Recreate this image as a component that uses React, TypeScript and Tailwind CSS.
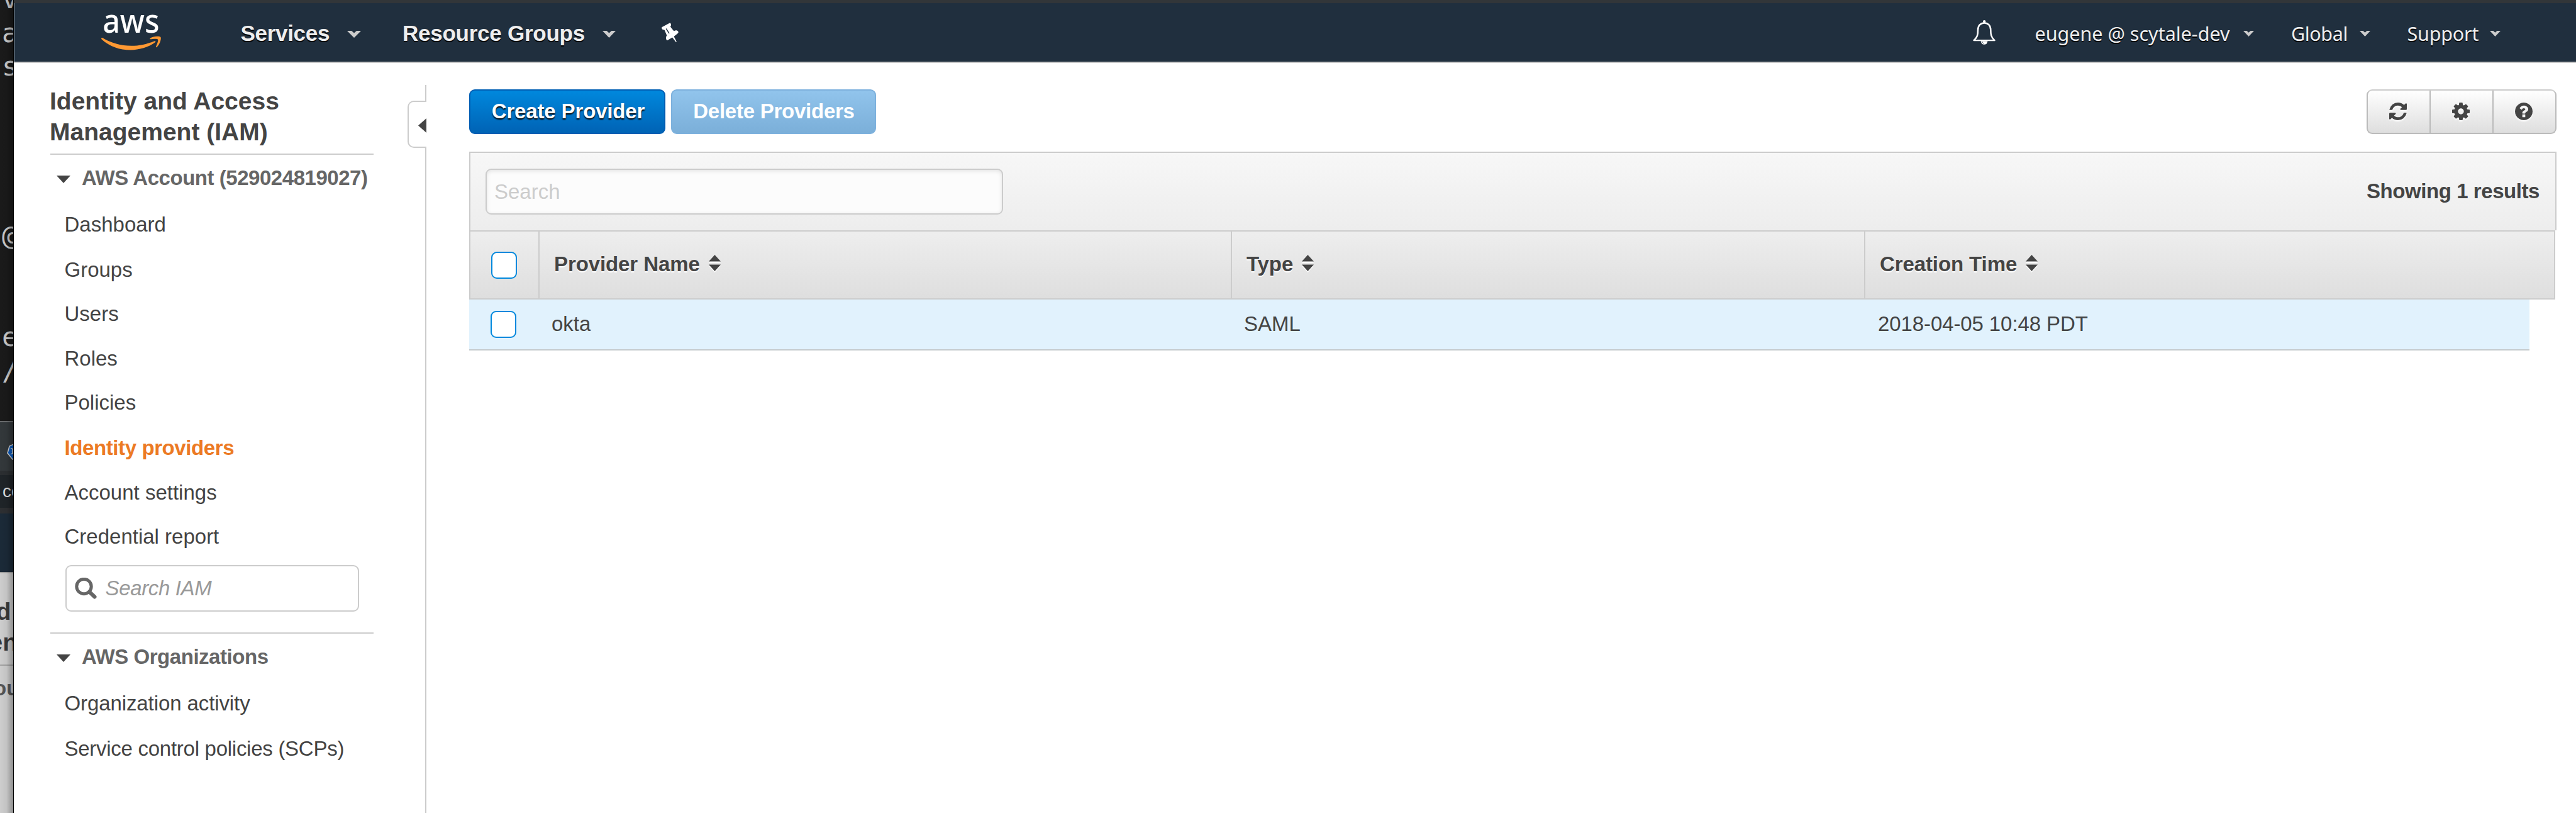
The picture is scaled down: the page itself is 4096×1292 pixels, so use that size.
import type { ReactNode } from "react";

const PATHS = {
  refresh:
    "M1639 1056q0 5-1 7-64 268-268 434.5t-478 166.5q-146 0-282.5-55t-243.5-157l-129 129q-19 19-45 19t-45-19-19-45v-448q0-26 19-45t45-19h448q26 0 45 19t19 45-19 45l-137 137q71 66 161 102t187 36q134 0 250-65t186-179q11-17 53-117 8-23 30-23h192q13 0 22.5 9.5t9.5 22.5zm25-800v448q0 26-19 45t-45 19h-448q-26 0-45-19t-19-45 19-45l138-138q-148-137-349-137-134 0-250 65t-186 179q-11 17-53 117-8 23-30 23h-199q-13 0-22.5-9.5t-9.5-22.5v-7q65-268 270-434.5t480-166.5q146 0 284 55.5t245 156.5l130-129q19-19 45-19t45 19 19 45z",
  cog: "M1024 896q0-106-75-181t-181-75-181 75-75 181 75 181 181 75 181-75 75-181zm512-109v222q0 12-8 23t-20 13l-185 28q-19 54-39 91 35 50 107 138 10 12 10 25t-9 23q-27 37-99 108t-94 71q-12 0-26-9l-138-108q-44 23-91 38-16 136-29 186-7 28-36 28h-222q-14 0-24.5-8.5t-11.5-21.5l-28-184q-49-16-90-37l-141 107q-10 9-25 9-14 0-25-11-126-114-165-168-7-10-7-23 0-12 8-23 15-21 51-66.5t54-70.5q-27-50-41-99l-183-27q-13-2-21-12.5t-8-23.5v-222q0-12 8-23t19-13l186-28q14-46 39-92-40-57-107-138-10-12-10-24 0-10 9-23 26-36 98.5-107.5t94.5-71.5q13 0 26 10l138 107q44-23 91-38 16-136 29-186 7-28 36-28h222q14 0 24.5 8.5t11.5 21.5l28 184q49 16 90 37l142-107q9-9 24-9 13 0 25 10 129 119 165 170 7 8 7 22 0 12-8 23-15 21-51 66.5t-54 70.5q26 50 41 98l183 28q13 2 21 12.5t8 23.5z",
  help: "M1024 1376v-192q0-14-9-23t-23-9h-192q-14 0-23 9t-9 23v192q0 14 9 23t23 9h192q14 0 23-9t9-23zm256-672q0-88-55.5-163t-138.5-116-170-41q-243 0-371 213-15 24 8 42l132 100q7 6 19 6 16 0 25-12 53-68 86-92 34-24 86-24 48 0 85.5 26t37.5 59q0 38-20 61t-68 45q-63 28-115.5 86.5t-52.5 125.5v36q0 14 9 23t23 9h192q14 0 23-9t9-23q0-19 21.5-49.5t54.5-49.5q32-18 49-28.5t46-35 44.5-48 28-60.5 12.5-81zm384 192q0 209-103 385.5t-279.5 279.5-385.5 103-385.5-103-279.5-279.5-103-385.5 103-385.5 279.5-279.5 385.5-103 385.5 103 279.5 279.5 103 385.5z",
};

function AwsLogo() {
  return (
    <svg className="h-[57px] w-[95px] shrink-0" viewBox="72 76 306 184" preserveAspectRatio="none">
      <text
        x="79"
        y="170"
        fill="#fff"
        fontFamily="'Noto Sans', sans-serif"
        fontWeight="500"
        fontSize="170"
        textLength="291"
        lengthAdjust="spacingAndGlyphs"
      >
        aws
      </text>
      <path
        fill="#ff9933"
        d="M74 196C71 199 72 201 75 204C115 240 165 258 223 258C265 258 315 244 348 219C353 215 349 210 343 213C306 228 265 237 226 237C172 237 122 222 82 198C79 196 76 194 74 196Z"
      />
      <path
        fill="#ff9933"
        d="M362 204C358 199 334 202 324 203C320 203 320 200 323 198C342 185 372 188 376 192C380 197 375 226 357 243C354 246 351 244 352 241C356 231 366 210 362 204Z"
      />
    </svg>
  );
}

function PinIcon() {
  return (
    <svg className="h-[31px] w-[27px] shrink-0" viewBox="77 55 87 100">
      <path
        fill="#fff"
        d="M78 78C76 86 80 92 88 91L92 93L104 121L101 125C97 133 100 143 106 146L132 131L150 154C152 156 154 154 153 151L140 126L160 110C164 106 164 102 161 99C156 94 148 93 143 97L138 96L122 76C127 70 127 61 120 56Z"
      />
      <path d="M101 87L115 109" stroke="#202f3e" strokeWidth="4.5" strokeLinecap="round" />
    </svg>
  );
}

function BellIcon() {
  return (
    <svg className="h-[39px] w-[36px] shrink-0" viewBox="54 48 117 126">
      <path
        d="M59 152C78 136 80 122 80 98C80 76 94 62 113 62C132 62 146 76 146 98C146 122 148 136 166 152Z"
        fill="none"
        stroke="#fff"
        strokeWidth="8"
        strokeLinejoin="round"
      />
      <circle cx="113" cy="55" r="7" fill="#fff" />
      <path d="M95 156A17.500 17.500 0 0 0 130 156Z" fill="#fff" />
      <path d="M101 158Q104 167 112 169" fill="none" stroke="#202f3e" strokeWidth="2.500" />
    </svg>
  );
}

function Chevron({ className }: { className: string }) {
  return (
    <svg className={className} viewBox="0 0 22 11" preserveAspectRatio="none">
      <path d="M0 0H7L11 3.500L15 0H22L11 11Z" fill="#ccc" />
    </svg>
  );
}

function SortIcon() {
  return (
    <svg className="ml-[14px] h-[28px] w-[19px]" viewBox="0 0 19 28">
      <path d="M9.500 2.500L19 13H0Z" fill="#fff" />
      <path d="M0 17.500H19L9.500 28Z" fill="#fff" />
      <path d="M9.500 0L19 10.500H0Z" fill="#444" />
      <path d="M0 15.500H19L9.500 26Z" fill="#444" />
    </svg>
  );
}

function Checkbox() {
  return <div className="h-[43px] w-[41px] rounded-[9px] border-2 border-[#0088dd] bg-white" />;
}

/* Strip of the windows that lie behind the browser, at the left edge. */
function BackgroundWindows() {
  const terminal = ["v", "a", "s", "", "", "", "", "@", "", "", "e", "/"];
  return (
    <div className="relative flex w-[21px] shrink-0 flex-col overflow-hidden">
      <div className="h-[669px] shrink-0 overflow-hidden bg-[#1a1a1a] pl-[3px] font-['DejaVu_Sans_Mono',monospace] text-[43px] text-[#c9c9c9]">
        <div className="-mt-[28px]">
          {terminal.map((c, i) => (
            <div key={i} className="h-[53.7px] leading-[53.7px]">
              {c}
            </div>
          ))}
        </div>
      </div>
      <div className="h-[79px] shrink-0 border-t-2 border-[#6a6c6e] bg-[#33383b] pt-[32px]">
        <svg className="ml-[11px] h-[28px] w-[30px]" viewBox="0 0 30 28">
          <path d="M15 1L4 6L1 17L9 27H21L29 17L26 6Z" fill="#0b5cc0" stroke="#d5d5d5" strokeWidth="1.500" />
          <circle cx="15" cy="14" r="6.500" fill="none" stroke="#d5d5d5" strokeWidth="1.500" />
          <path d="M15 4V24M6 9L24 19M6 19L24 9" stroke="#d5d5d5" strokeWidth="1.200" />
        </svg>
      </div>
      <div className="h-[7px] shrink-0 bg-[#2b2e31]" />
      <div className="h-[52px] shrink-0 bg-[#1f2428] pl-[4px] font-['Liberation_Sans',sans-serif] text-[28px] leading-[52px] text-[#dcdcdc]">
        co
      </div>
      <div className="h-[9px] shrink-0 bg-[#2d2f32]" />
      <div className="h-[93px] shrink-0 bg-[#1b2a38]" />
      <div className="flex-1 border-t-2 border-[#a0a0a0] bg-[#cdcdcd] font-['Liberation_Sans',sans-serif] font-bold text-[#383838]">
        <div className="-ml-[6.300px] mt-[36px] h-[49.400px] text-[39px] leading-[49.400px]">d</div>
        <div className="-ml-[17.500px] h-[49.400px] text-[39px] leading-[49.400px]">en</div>
        <div className="mt-[10px] h-[2px] bg-[#a3a3a3]" />
        <div className="-ml-[10px] mt-[14px] h-[44px] text-[33px] leading-[44px] text-[#555]">ou</div>
      </div>
      <div className="absolute inset-0 bg-gradient-to-r from-black/0 via-black/5 to-black/30" />
    </div>
  );
}

function TopBar() {
  return (
    <header className="flex h-[100px] shrink-0 flex-col">
      <div className="h-[5px] bg-[#323639]" />
      <div className="flex h-[93px] items-center border-l-2 border-[#4b5966] bg-[#202f3e] font-['Liberation_Sans',sans-serif] text-[#eee]">
        <div className="ml-[137px]">
          <AwsLogo />
        </div>
        <div className="mt-[2px] flex items-center text-[35px] font-bold leading-none [text-shadow:0_2px_0_#000]">
          <span className="ml-[126.500px] w-[169.500px] tracking-[-0.3px]">Services</span>
          <Chevron className="mt-[3px] h-[11px] w-[22px]" />
          <span className="ml-[66px] w-[317.500px] tracking-[-0.25px]">Resource Groups</span>
          <Chevron className="mt-[3px] h-[11px] w-[21px]" />
        </div>
        <div className="ml-[73px]">
          <PinIcon />
        </div>
        <div className="ml-auto mr-[120px] flex items-center">
          <BellIcon />
          <div className="mt-[4px] flex items-center font-['Noto_Sans',sans-serif] text-[30.500px] leading-none [text-shadow:0_2px_0_#000]">
            <span className="ml-[62.500px] w-[331px]">eugene @ scytale-dev</span>
            <Chevron className="h-[9px] w-[17px]" />
            <span className="ml-[59.500px] w-[108.500px] tracking-[-0.4px]">Global</span>
            <Chevron className="h-[9px] w-[17px]" />
            <span className="ml-[59px] w-[131.500px] tracking-[-0.2px]">Support</span>
            <Chevron className="h-[9px] w-[17px]" />
          </div>
        </div>
      </div>
      <div className="h-[2px] bg-[#c9c9c9]" />
    </header>
  );
}

function SectionHead({ children }: { children: ReactNode }) {
  return (
    <div className="flex h-[74px] items-center pl-[10px] text-[33px] font-bold tracking-[-0.46px] text-[#666]">
      <svg className="mr-[18px] mt-[4px] h-[12px] w-[22px]" viewBox="0 0 22 12">
        <path d="M0 0H22L11 12Z" fill="#444" />
      </svg>
      {children}
    </div>
  );
}

function SideItem({ children, className = "" }: { children: ReactNode; className?: string }) {
  return <div className={`h-[70.400px] pl-[22.500px] text-[33px] leading-[70.400px] ${className}`}>{children}</div>;
}

function Sidebar() {
  return (
    <aside className="flex w-[656px] shrink-0">
      <nav className="ml-[58px] mt-[36px] w-[514px] whitespace-nowrap text-[#444]">
        <h1 className="-ml-px text-[39px] font-bold leading-[49.400px]">
          Identity and Access
          <br />
          Management (IAM)
        </h1>
        <div className="mt-[9px] h-[2px] bg-[#ccc]" />
        <SectionHead>AWS Account (529024819027)</SectionHead>
        <div className="mt-[2px]">
          <SideItem>Dashboard</SideItem>
          <SideItem className="mt-[1.800px]">Groups</SideItem>
          <SideItem>Users</SideItem>
          <SideItem>Roles</SideItem>
          <SideItem>Policies</SideItem>
          <SideItem className="mt-[1.800px] font-bold tracking-[-0.4px] text-[#ec7a24]">Identity providers</SideItem>
          <SideItem>Account settings</SideItem>
          <SideItem>Credential report</SideItem>
        </div>
        <div className="ml-[23.500px] mt-[9px] flex h-[74px] w-[467px] items-center rounded-[9px] border-2 border-[#ccc] pl-[13px]">
          <svg className="h-[34px] w-[35px]" viewBox="0 0 35 34">
            <circle cx="14.500" cy="14" r="11.700" fill="none" stroke="#666" strokeWidth="5" />
            <path d="M23 22.500L31.500 30.500" stroke="#666" strokeWidth="6" strokeLinecap="round" />
          </svg>
          <span className="ml-[14px] text-[33px] italic leading-none tracking-[-0.35px] text-[#999]">Search IAM</span>
        </div>
        <div className="mt-[33px] h-[2px] bg-[#ccc]" />
        <SectionHead>AWS Organizations</SectionHead>
        <div className="mt-[2px]">
          <SideItem className="tracking-[-0.1px]">Organization activity</SideItem>
          <SideItem className="mt-[1.800px] tracking-[-0.27px]">Service control policies (SCPs)</SideItem>
        </div>
      </nav>
      <div className="ml-auto mt-[35px] flex w-[30px] flex-col">
        <div className="h-[25px] border-r-2 border-[#ccc]" />
        <div className="flex h-[75px] shrink-0 items-center justify-end rounded-l-[10px] border-y-2 border-l-2 border-[#ccc]">
          <svg className="mt-[3px] h-[23px] w-[13px]" viewBox="0 0 13 23">
            <path d="M0 11.500L13 0V23Z" fill="#444" />
          </svg>
        </div>
        <div className="flex-1 border-r-2 border-[#ccc]" />
      </div>
    </aside>
  );
}

function ToolButton({ path, viewBox, className }: { path: string; viewBox: string; className: string }) {
  return (
    <button className={`flex items-center justify-center pb-px pr-[2px] ${className}`}>
      <svg className="h-[28px] w-[28px] drop-shadow-[0_2px_1px_#fff]" viewBox={viewBox}>
        <path d={path} fill="#444" />
      </svg>
    </button>
  );
}

function Actions() {
  return (
    <div className="flex h-[71px] text-[33px] font-bold leading-none text-white">
      <button className="h-[71px] w-[312px] rounded-[9px] border-2 border-[#005eb3] bg-gradient-to-b from-[#0088dd] to-[#0063b5] pb-[2px] pl-[3px] tracking-[-0.15px] [text-shadow:0_2px_2px_#000]">
        Create Provider
      </button>
      <button className="ml-[9px] h-[71px] w-[326px] rounded-[9px] border-2 border-[#7db1dd] bg-gradient-to-b from-[#91c4ec] to-[#7bafd9] pb-[2px] pl-px tracking-[-0.25px]">
        Delete Providers
      </button>
      <div className="ml-auto flex h-[71px] w-[302px] rounded-[9px] border-2 border-[#bbb] border-t-[#ccc] bg-gradient-to-b from-white to-[#dedede]">
        <ToolButton path={PATHS.refresh} viewBox="128 128 1536 1536" className="w-[98px]" />
        <ToolButton path={PATHS.cog} viewBox="0 128 1536 1536" className="w-[100px] border-l-2 border-[#bbb]" />
        <ToolButton path={PATHS.help} viewBox="128 128 1536 1536" className="flex-1 border-l-2 border-[#bbb]" />
      </div>
    </div>
  );
}

function HeadCell({ label, className }: { label: string; className: string }) {
  return (
    <div className={`flex items-center border-l-2 border-[#ccc] pb-[4px] pl-[23px] ${className}`}>
      <span className="tracking-[-0.1px] [text-shadow:0_2px_0_#fff]">{label}</span>
      <SortIcon />
    </div>
  );
}

function ProvidersTable() {
  return (
    <section className="mt-[28px] text-[33px] leading-none text-[#444]">
      <div className="flex h-[125px] items-center border-2 border-b-0 border-[#ccc] bg-gradient-to-b from-[#f7f7f7] to-[#ededed] pl-[24px] pr-[25px]">
        <div className="flex h-[73px] w-[823px] items-center rounded-[9px] border-2 border-[#ccc] bg-[#fcfcfc] pl-[12px] text-[#ccc] shadow-[inset_0_2px_6px_rgba(0,0,0,0.1)]">
          Search
        </div>
        <span className="-mt-[3px] ml-auto font-bold tracking-[-0.43px]">Showing 1 results</span>
      </div>
      <div className="flex h-[110px] w-[3317px] border-2 border-[#ccc] bg-gradient-to-b from-[#eeeeee] to-[#dedede] font-bold">
        <div className="flex w-[108px] items-center pl-[33px]">
          <Checkbox />
        </div>
        <HeadCell label="Provider Name" className="w-[1101px]" />
        <HeadCell label="Type" className="w-[1007px]" />
        <HeadCell label="Creation Time" className="flex-1" />
      </div>
      <div className="flex h-[81px] w-[3276px] items-center border-b-2 border-[#c5cacd] bg-[#e1f2fd]">
        <div className="w-[131px] pl-[33.500px]">
          <Checkbox />
        </div>
        <span className="-mt-[3px] w-[1101px]">okta</span>
        <span className="-mt-[3px] w-[1008px]">SAML</span>
        <span className="-mt-[3px] tracking-[-0.1px]">2018-04-05 10:48 PDT</span>
      </div>
    </section>
  );
}

export default function App() {
  return (
    <div className="flex h-[1292px] w-[4096px] overflow-hidden bg-white font-['Liberation_Sans',Arial,sans-serif]">
      <BackgroundWindows />
      <div className="w-px shrink-0 bg-black" />
      <div className="flex min-w-0 flex-1 flex-col">
        <TopBar />
        <div className="flex min-h-0 flex-1">
          <Sidebar />
          <main className="ml-[68px] mr-[31px] mt-[42px] min-w-0 flex-1">
            <Actions />
            <ProvidersTable />
          </main>
        </div>
      </div>
    </div>
  );
}
